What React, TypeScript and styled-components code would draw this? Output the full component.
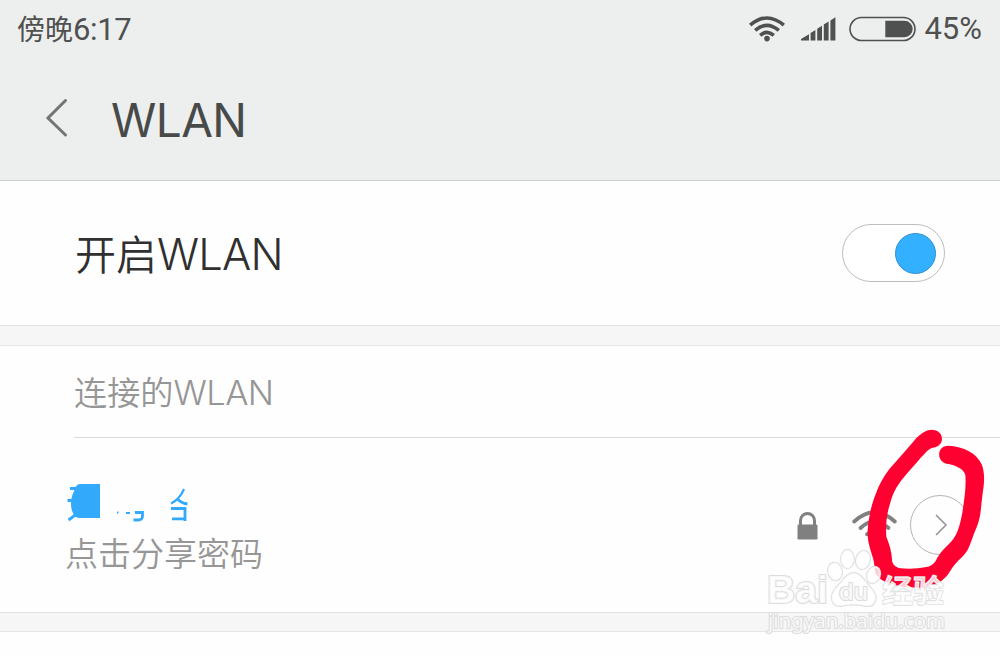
import styled, { createGlobalStyle } from "styled-components";

const GlobalStyle = createGlobalStyle`
  * {
    box-sizing: border-box;
  }

  body {
    margin: 0;
    background: #fefefe;
    font-family: Roboto, "Noto Sans CJK SC", sans-serif;
  }
`;

const Screen = styled.main`
  position: relative;
  width: 1000px;
  height: 656px;
  overflow: hidden;
  background: #fefefe;
`;

const TopArea = styled.header`
  height: 181px;
  background: #edefee;
  border-bottom: 1px solid #cdcfce;
`;

const StatusBar = styled.div`
  display: flex;
  align-items: center;
  justify-content: space-between;
  height: 58px;
  padding: 0 18px 0 17px;
  color: #4f5150;
`;

const StatusIcons = styled.div`
  display: flex;
  align-items: center;
  padding-bottom: 1px;
`;

const Label = styled.span<{
  $size: number;
  $color: string;
  $weight?: number;
  $spacing?: number;
}>`
  display: inline-block;
  font-size: ${({ $size }) => $size}px;
  font-weight: ${({ $weight }) => $weight ?? 400};
  letter-spacing: ${({ $spacing }) => $spacing ?? 0}px;
  line-height: 1;
  white-space: nowrap;
  color: ${({ $color }) => $color};
`;

const LatinLabel = styled(Label)`
  font-family: Inter, sans-serif;
`;

const MixedText = styled.div`
  display: flex;
  align-items: baseline;
`;

const TitleBar = styled.div`
  display: flex;
  align-items: center;
  gap: 41px;
  height: 122px;
  padding: 0 0 2px 44px;
`;

const Title = styled.h1`
  margin: 0;
  padding-top: 4px;
  font-family: Inter, sans-serif;
  font-size: 46px;
  font-weight: 400;
  line-height: 1;
  letter-spacing: -0.6px;
  color: #484a49;
`;

const ToggleRow = styled.section`
  display: flex;
  align-items: center;
  justify-content: space-between;
  height: 144px;
  padding: 0 55px 0 75px;

  ${MixedText} {
    padding-top: 4px;
  }
`;

const Toggle = styled.button`
  display: flex;
  align-items: center;
  justify-content: flex-end;
  width: 103px;
  height: 58px;
  padding: 0 8px 0 0;
  border: 1px solid #bdbdbd;
  border-radius: 29px;
  background: #fff;
`;

const Knob = styled.span`
  width: 41px;
  height: 41px;
  border: 1px solid #3390cd;
  border-radius: 50%;
  background: #33b0ff;
`;

const Gap = styled.div<{ $height: number }>`
  height: ${({ $height }) => $height}px;
  background: #f6f6f6;
  border-top: 1px solid #e2e2e2;
  border-bottom: 1px solid #e6e6e6;
`;

const SectionHeader = styled.div`
  display: flex;
  align-items: center;
  height: 92px;
  margin-left: 74px;
  padding-top: 4px;
  border-bottom: 1px solid #dadada;
`;

const NetworkRow = styled.section`
  display: flex;
  align-items: flex-start;
  justify-content: space-between;
  height: 174px;
  padding: 44px 30px 0 65px;
`;

const NetworkInfo = styled.div`
  display: flex;
  flex-direction: column;
  gap: 14px;
`;

const NetworkIcons = styled.div`
  display: flex;
  align-items: center;
  height: 85px;
`;

const DetailButton = styled.button`
  display: flex;
  align-items: center;
  justify-content: center;
  width: 60px;
  height: 60px;
  margin-left: 13px;
  padding: 0 0 0 2px;
  border: 1px solid #b5b5b5;
  border-radius: 50%;
  background: transparent;
`;

const LockIcon = styled.svg`
  margin: 3px 34px 0 0;
`;

const Overlay = styled.svg`
  position: absolute;
  top: 0;
  left: 0;
  pointer-events: none;
`;

const SignalIcon = styled.svg`
  margin-left: 16px;
`;

const BatteryIcon = styled.svg`
  margin: 0 8px 0 13px;
`;

function StatusWifi() {
  return (
    <svg width="36" height="26" viewBox="0 0 36 26" fill="none" stroke="#4f5150" strokeWidth="3.6">
      <path d="M1.2 9.2Q18-5.2 34.8 9.2" />
      <path d="M6.2 14.4Q18 4.2 29.8 14.4" />
      <path d="M11.2 19.4Q18 13.2 24.8 19.4" />
      <circle cx="18" cy="22.6" r="2.8" fill="#4f5150" stroke="none" />
    </svg>
  );
}

function Signal() {
  return (
    <SignalIcon width="35" height="24" viewBox="0 0 35 24" fill="#4f5150">
      <path d="M0 23.5V22L8 17.3V23.5ZM9.6 23.5V16L14.4 13V23.5ZM16.2 23.5V11.8L21 8.8V23.5ZM22.8 23.5V7.6L27.6 4.6V23.5ZM29.4 23.5V3.4L34.4 .3V23.5Z" />
    </SignalIcon>
  );
}

function Battery() {
  return (
    <BatteryIcon width="67" height="26" viewBox="0 0 67 26">
      <rect x="1" y="1.5" width="65" height="23" rx="11.5" fill="none" stroke="#4f5150" strokeWidth="1.6" />
      <path d="M36.3 4.8H55.5A8.2 8.2 0 0 1 55.5 21.2H36.3Z" fill="#4f5150" />
    </BatteryIcon>
  );
}

function HiddenName() {
  return (
    <svg width="130" height="42" viewBox="65 482 130 42" fill="none" stroke="#33a9fb" strokeWidth="2.8">
      <path d="M80 484H100V518H79C75 518 71 512 71 504C71 495 74 493 75 488Q77 484 80 484Z" fill="#33a9fb" stroke="none" />
      <path d="M70 488.5H78M67.5 500.5H74M68.5 520L76 514.5" />
      <path d="M126 513H130M117 512.5H118.5" strokeWidth="2" />
      <path d="M135 512.5H142.5V516Q142.5 520 138 520H133.5" />
      <path d="M184 489Q180 499 171 503.5" strokeWidth="2.2" />
      <path d="M177.5 499Q181 503 187.5 504M171 508.5H185V521M172 518.8H185" />
    </svg>
  );
}

function Watermark() {
  return (
    <g
      fill="#fff"
      fillOpacity=".8"
      stroke="#dcdcdc"
      strokeWidth="2"
      paintOrder="stroke"
      strokeLinejoin="round"
    >
      <text x="767" y="603" fontFamily="Liberation Sans" fontSize="38" fontWeight="700" textLength="61" lengthAdjust="spacingAndGlyphs">
        Bai
      </text>
      <g strokeWidth="1.8">
        <ellipse cx="835" cy="571.5" rx="7" ry="9" transform="rotate(-12 835 571.5)" />
        <ellipse cx="847.5" cy="559" rx="6.5" ry="9.3" />
        <ellipse cx="863" cy="560" rx="7" ry="9.3" transform="rotate(14 863 560)" />
        <ellipse cx="873.5" cy="575" rx="6.5" ry="8.5" transform="rotate(22 873.5 575)" />
        <path d="M854 573C861 573 865 582 871 588C880 598 875 607 866 606C857 604 850 604 842 606C832 607 828 597 836 588C842 582 846 573 854 573Z" />
      </g>
      <text x="839" y="600" fontFamily="Inter" fontSize="23" fontWeight="500" textLength="29" lengthAdjust="spacingAndGlyphs">
        du
      </text>
      <text x="882" y="602" fontFamily="Noto Sans CJK SC" fontSize="31" fontWeight="700" strokeWidth="1.4">
        经验
      </text>
      <text x="768" y="628" fontFamily="Noto Sans" fontSize="20" textLength="177" lengthAdjust="spacingAndGlyphs">
        jingyan.baidu.com
      </text>
    </g>
  );
}

export default function App() {
  return (
    <Screen>
      <GlobalStyle />
      <TopArea>
        <StatusBar>
          <MixedText>
            <Label $size={28} $color="#4f5150">傍晚</Label>
            <Label $size={31} $color="#4f5150" $spacing={-0.4}>6:17</Label>
          </MixedText>
          <StatusIcons>
            <StatusWifi />
            <Signal />
            <Battery />
            <Label $size={31} $color="#4f5150">45%</Label>
          </StatusIcons>
        </StatusBar>
        <TitleBar>
          <svg width="26" height="42" viewBox="0 0 26 42" fill="none" stroke="#737574" strokeWidth="3" strokeLinecap="round">
            <path d="M21.5 3.5L4 21L21.5 38" />
          </svg>
          <Title>WLAN</Title>
        </TitleBar>
      </TopArea>

      <ToggleRow>
        <MixedText>
          <Label $size={41} $color="#303030" $weight={350}>开启</Label>
          <LatinLabel $size={43.5} $color="#303030" $weight={350} $spacing={-0.8}>WLAN</LatinLabel>
        </MixedText>
        <Toggle role="switch" aria-checked="true">
          <Knob />
        </Toggle>
      </ToggleRow>

      <Gap $height={21} />

      <SectionHeader>
        <MixedText>
          <Label $size={33.2} $color="#969696" $weight={350}>连接的</Label>
          <LatinLabel $size={34.5} $color="#969696" $weight={350} $spacing={-0.6}>WLAN</LatinLabel>
        </MixedText>
      </SectionHeader>

      <NetworkRow>
        <NetworkInfo>
          <HiddenName />
          <Label $size={33} $color="#969696" $weight={350}>点击分享密码</Label>
        </NetworkInfo>
        <NetworkIcons>
          <LockIcon width="21" height="28" viewBox="0 0 21 28" fill="none">
            <path d="M3.5 14V8.5a7 7 0 0 1 14 0V14" stroke="#808080" strokeWidth="3" />
            <rect x=".5" y="12.5" width="20" height="15" rx="1.2" fill="#808080" />
          </LockIcon>
          <svg width="45" height="32" viewBox="0 0 45 32" fill="none" stroke="#808080" strokeWidth="3.8" strokeLinecap="round">
            <path d="M2.2 12.5Q22.5-6 42.8 12.5" />
            <path d="M8.5 19Q22.5 6 36.5 19" />
            <path d="M15 25.2Q22.5 19 30 25.2" />
            <circle cx="22.5" cy="28.5" r="2.5" fill="#808080" stroke="none" />
          </svg>
          <DetailButton aria-label="详情">
            <svg width="14" height="24" viewBox="0 0 14 24" fill="none" stroke="#929292" strokeWidth="1.5">
              <path d="M2 2L12 12L2 22" />
            </svg>
          </DetailButton>
        </NetworkIcons>
      </NetworkRow>

      <Gap $height={20} />

      <Overlay width="1000" height="656" viewBox="0 0 1000 656">
        <path
          transform="translate(780 420) scale(.33333)"
          fill="#ff0130"
          d="M455 29C440 29 426 38 410 53L370 100L328 147C310 172 297 194 288 220C275 252 266 290 263 330C262 358 267 376 276 405C286 432 281 445 288 461C298 478 314 486 331 490C350 498 367 502 390 502C430 506 462 500 485 482C500 472 508 458 518 442C533 421 553 409 564 388C574 368 579 346 590 322C604 289 603 253 608 220C613 189 615 161 606 135C590 98 551 80 505 77C468 77 468 130 506 132C530 137 551 147 556 165C559 200 553 240 547 278C540 316 532 345 512 367C496 383 480 396 467 423C459 434 450 440 438 441C410 447 380 447 356 444C343 439 336 431 336 418C335 396 329 374 319 350C317 320 319 285 330 251C337 225 346 206 358 190C377 164 397 144 421 115C437 98 446 85 458 83C475 82 486 70 486 57C486 41 474 29 455 29Z"
        />
        <Watermark />
      </Overlay>
    </Screen>
  );
}
